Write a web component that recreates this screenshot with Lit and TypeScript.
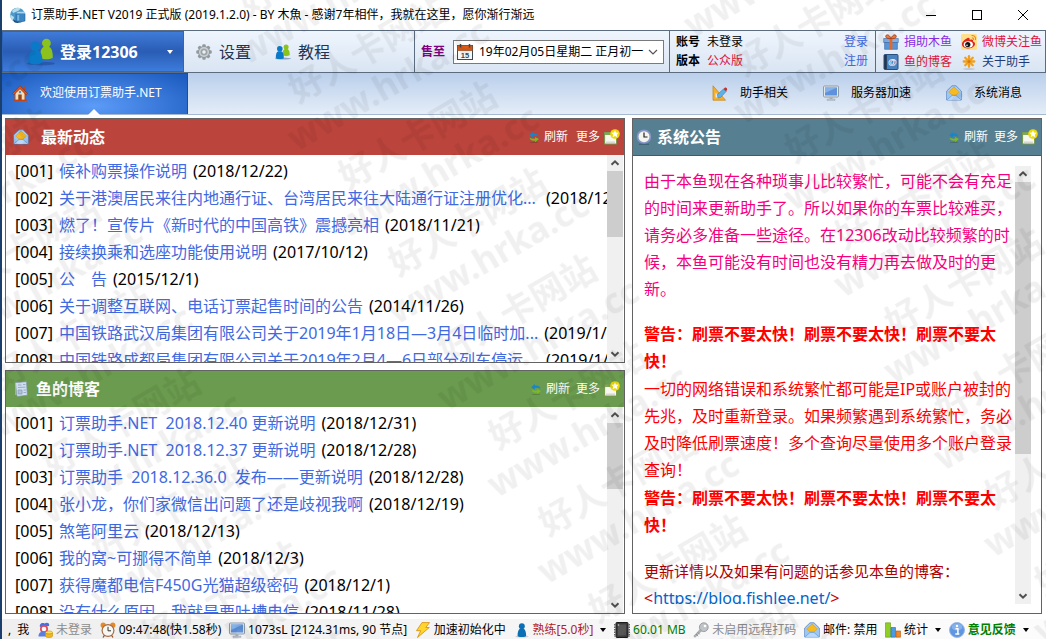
import { LitElement, html, svg, css, nothing, type TemplateResult } from "lit";
import { customElement, property } from "lit/decorators.js";

const icon = (body: unknown, cls = "") =>
  html`<svg class="icon ${cls}" viewBox="0 0 16 16" aria-hidden="true">${body}</svg>`;

const person = (dx: number, dy: number, k: number, fill: string) => svg`
  <g transform="translate(${dx} ${dy}) scale(${k})">
    <circle cx="4" cy="3" r="2.800" fill=${fill}></circle>
    <path d="M0 12.400C-.2 8.600.8 6 2.400 5.400h3.200C7.200 6 8.200 8.600 8 12.400 5.500 13.600 2.500 13.600 0 12.400z" fill=${fill}></path>
  </g>`;

const ICONS = {
  app: svg`<circle cx="7.500" cy="8" r="7.300" fill="#4b9ac9"></circle>
    <path d="M2 4C5 0 9 .5 11 1.500L8 4 3 6zM1 8l3 2-1 4C1 12 .4 10 .5 8z" fill="#b8dce9"></path>
    <path d="M3 12c3 3 7 3.500 10 .5l-1 2c-3 2-6 1.500-8 .5z" fill="#1d4f80"></path>
    <path d="M6 6.500h9v7.500l-4.500 1L6 14z" fill="#3d86c4" stroke="#215f95" stroke-width=".6"></path>
    <path d="M6 6.500l2-1.800h7l.3 1.800z" fill="#a9d5ef"></path><path d="M7.200 8h2v5.500h-2z" fill="#76b7e2"></path>`,
  users: svg`<ellipse cx="8" cy="14.600" rx="8" ry="1" fill="#123a7c" opacity=".4"></ellipse>
    ${person(7.500, .2, .9, "#8cc21d")}${person(.8, 1.800, 1, "#0a7ac8")}`,
  user: svg`<ellipse cx="8" cy="14.500" rx="6.500" ry="1" fill="#888" opacity=".35"></ellipse>${person(3.600, 1, 1.060, "#0a6fb5")}`,
  gear: svg`<g fill="#929a9f">${[0, 45, 90, 135].map(
    (a) => svg`<rect x="6.300" y=".3" width="3.400" height="15.400" rx="1" transform="rotate(${a} 8 8)"></rect>`)}
    <circle cx="8" cy="8" r="6"></circle></g>
    <circle cx="8" cy="8" r="5" fill="#cdd3d5"></circle><circle cx="8" cy="8" r="3.600" fill="#a3abaf"></circle>
    <circle cx="8" cy="8" r="2.200" fill="#eaf0f6" stroke="#7f888d" stroke-width=".6"></circle>`,
  house: svg`<path d="M3 8v7.500h10V8L8 3z" fill="#f6dcb4" stroke="#b64a1c" stroke-width="1"></path>
    <path d="M11.500 1.500h2V6l-2-2z" fill="#b64a1c"></path>
    <path d="M8 .8L15.500 8.500l-1.300 1.300L8 3.800 1.800 9.800.5 8.500z" fill="#df5420" stroke="#8d2d0d" stroke-width=".6"></path>
    <path d="M6.300 9.500h3.400v6H6.300z" fill="#91481e"></path><circle cx="8" cy="7" r="1.200" fill="#4d91cd"></circle>
    <path d="M1 15.200h14" stroke="#c9411a" stroke-width="1.200"></path>`,
  calendar: svg`<rect x=".5" y="1.500" width="15" height="14" fill="#f6f8f8" stroke="#3d4b50"></rect>
    <path d="M.5 1.500h15v5H.5z" fill="#dd5b17"></path><path d="M.5 6.500h15" stroke="#8f3c10" stroke-width=".6"></path>
    <path d="M3.500 0v3.500M12.500 0v3.500" stroke="#444" stroke-width="1.500"></path>
    <text x="8" y="14" text-anchor="middle" font-size="7.500" font-weight="700" fill="#354b55" font-family="Liberation Sans, sans-serif">15</text>`,
  gift: svg`<path d="M.7 4.500h14.600v4H.7z" fill="#7fb2e8" stroke="#3f72ab" stroke-width=".6"></path>
    <path d="M1.600 8.500h12.800v6.800H1.600z" fill="#5b94d6" stroke="#3867a3" stroke-width=".6"></path>
    <path d="M6.600 4.500h2.800v10.800H6.600z" fill="#e06a2c"></path>
    <path d="M8 4.500C5 5 2.300 4 2.800 2S6.500.5 8 4.500C9.500.5 12.700 0 13.200 2S11 5 8 4.500z" fill="#ee8148" stroke="#b23c12" stroke-width=".9"></path>`,
  weibo: svg`<rect width="16" height="16" rx="1.500" fill="#ffe08a"></rect>
    <path d="M6.500 4C3 5.500.6 8.500 1 11c.5 2.500 3.500 3.600 6.500 3.400 4-.3 6.800-2.500 6.500-5-.2-1.400-1.500-1.700-2-2 .3-1.500-.6-2.400-3.300-1.400.2-1.500-.5-2.500-2.200-2z" fill="#e0261b"></path>
    <ellipse cx="7.300" cy="10.400" rx="4.600" ry="3.200" fill="#fff"></ellipse><circle cx="6.800" cy="10.500" r="2.600" fill="#141414"></circle>
    <circle cx="6" cy="11.200" r=".8" fill="#fff"></circle>
    <path d="M10.500 1.500c2.800-.3 4.700 1.800 4 4.600M10.800 3.800c1.400-.1 2 .8 1.700 2" fill="none" stroke="#f08a1c" stroke-width="1.100"></path>`,
  book: svg`<rect x="1" y=".5" width="14" height="15" rx="1" fill="#4a82bf" stroke="#27507f"></rect>
    <path d="M1.200 1h2.600v14H1.200z" fill="#22364e"></path>
    <text x="9.300" y="11.300" text-anchor="middle" font-size="9" font-weight="700" fill="#fff" font-family="Liberation Sans, sans-serif">@</text>`,
  spark: svg`<ellipse cx="8" cy="15" rx="6" ry=".8" fill="#999" opacity=".5"></ellipse>
    <g stroke="#f2a01b" stroke-width="2.300" stroke-linecap="round">${[0, 45, 90, 135].map(
    (a) => svg`<path d="M8 2.200v10.600" transform="rotate(${a} 8 7.500)"></path>`)}</g><circle cx="8" cy="7.500" r="1.500" fill="#d87908"></circle>`,
  ruler: svg`<path d="M1 .8l12.500 14.400H1z" fill="#f5b02c" stroke="#c57f0c" stroke-width=".7"></path><path d="M3.500 7.500l4.300 5H3.500z" fill="#dce9f7"></path>
    <path d="M6 13l-.6-3.500L11.500 4l2.600 2.600L8.500 12.500z" fill="#5fb0e4" stroke="#3a82b6" stroke-width=".6"></path>
    <path d="M11.500 4l1.500-1.400c1-.6 2.600 1 2.100 2L14.100 6.600z" fill="#c22f2a"></path>`,
  monitor: svg`<rect x=".5" y="1" width="15" height="11" rx="1" fill="#e4e9ee" stroke="#8e9ba8"></rect>
    <rect x="2" y="2.500" width="12" height="8" fill="#5e92dc"></rect><path d="M2 2.500h12L2 8z" fill="#86b2ea"></path>
    <path d="M6.500 12h3v2h-3z" fill="#aab3bc"></path><path d="M4 14h8v1.400H4z" fill="#c4cbd1" stroke="#8e9ba8" stroke-width=".4"></path>`,
  mail: svg`<path d="M.7 6L6 .8h4L15.300 6v9H.7z" fill="#a9cef6" stroke="#4f83bf" stroke-width=".8"></path>
    <path d="M2.500 7L8 2l5.500 5L10 10H6z" fill="#f6bb21" stroke="#d08f10" stroke-width=".5"></path>
    <path d="M1 7l5 3.500h4L15 7v8H1z" fill="#9cc6f5"></path><path d="M1 14.800L6 10.500h4l5 4.300" fill="#b9d8fa" stroke="#5c8fca" stroke-width=".6"></path>`,
  note: svg`<path d="M2.500 1.500l11-.8.8 13.600L4 15.500z" fill="#cfdeee" stroke="#7f93a9" stroke-width=".7"></path>
    <path d="M5 4h3.500M10 3.500h2.500M5 6.500l7.500-.4M5 9h4v4H5.300zM10.500 9h2.500M10.500 11.500h2.500" stroke="#8a9fb8" fill="#aec1d8" stroke-width=".8"></path>
    <path d="M2.800 2.500v12" stroke="#e9f1f8" stroke-dasharray="1 1"></path>`,
  clock: svg`<circle cx="8" cy="7.700" r="7.200" fill="#8796c9"></circle><circle cx="8" cy="7.700" r="5.500" fill="#f4f5ef"></circle>
    <path d="M8 3.500V8h3.500" fill="none" stroke="#222" stroke-width="1.200"></path><path d="M3 15.300h10" stroke="#2f4a5a" stroke-width="1" opacity=".6"></path>`,
  refresh: svg`<path d="M1.500 6L6.500 1.200v2.300c4-.8 7 .7 7.500 4.500-2-2-4.500-2-7.500-1.600V8.500z" fill="#1685cc"></path>
    <path d="M14.500 10.500L9.500 15v-2.200C6 13.600 2.700 12.400 2 8.800c2 1.600 4.500 1.700 7.500 1.200V8z" fill="#7cba24"></path>
    <path d="M3 15.500h10" stroke="#222" opacity=".3"></path>`,
  fresh: svg`<rect x=".6" y="3.500" width="12" height="11.500" fill="#f6f7ee" stroke="#74964a"></rect><path d="M1 3.500h11.500V6H1z" fill="#80a957"></path>
    <path d="M2 12.500h9V14H2z" fill="#d6d8cf"></path><circle cx="11" cy="5" r="4.800" fill="#f0d800"></circle>
    <path d="M11 1.200l1.100 2.400 2.600.2-1.900 1.900.6 2.600L11 7l-2.400 1.300.6-2.600-1.900-1.900 2.600-.2z" fill="#fff"></path>`,
  offline: svg`<path d="M3 5C2 2 5 0 7.500 1.500 10 0 13 1 12 4z" fill="#4a6edb"></path><circle cx="7" cy="7" r="4" fill="#e04c5a"></circle>
    <circle cx="7" cy="7" r="2.300" fill="#fff"></circle><path d="M1.500 14.500C1.500 11 3 9.500 7 9.500s5 2 5 5z" fill="#5a7fe0"></path>
    <ellipse cx="12" cy="10.500" rx="3.500" ry="1.600" fill="#ffdc55" stroke="#c8900e" stroke-width=".6"></ellipse><path d="M8.500 11v3c0 2 7 2 7 0v-3c-1 1.500-6 1.500-7 0z" fill="#f4b81f" stroke="#c8900e" stroke-width=".6"></path>`,
  alarm: svg`<circle cx="3.200" cy="3.200" r="2.600" fill="#e58b26"></circle><circle cx="12.800" cy="3.200" r="2.600" fill="#e58b26"></circle>
    <path d="M3 15.500l2-3M13 15.500l-2-3" stroke="#8b4a1b" stroke-width="1.300"></path>
    <circle cx="8" cy="8.500" r="6.500" fill="#a86a45"></circle><circle cx="8" cy="8.500" r="5.300" fill="#f8f8f3"></circle>
    <path d="M8 4.800v4h3" fill="none" stroke="#333"></path>`,
  bolt: svg`<path d="M7 .6h7.500L10.800 5.500h3.500L2.500 15.500l3.200-6.800H1.500z" fill="#ffd52e" stroke="#d38c0b" stroke-width=".8"></path>`,
  chip: svg`<rect x="2" y=".5" width="12" height="15" rx=".8" fill="#3c3c3c" stroke="#1c1c1c"></rect>
    <path d="M.8 2v13M15.200 2v13" stroke="#555" stroke-width="1.400" stroke-dasharray="1.500 1"></path><path d="M4 2.500h8v11H4z" fill="#575757"></path>
    <circle cx="4.500" cy="3" r=".8" fill="#ccc"></circle>`,
  key: svg`<path d="M9 8.500L2 15.300.8 14.200 7.500 7z" fill="#b0b4b6" stroke="#8a8f92" stroke-width=".6"></path><path d="M3 12l2 2.200M4.700 10.300l2 2" stroke="#8a8f92"></path>
    <circle cx="10.800" cy="5.200" r="4.400" fill="#c0c4c6" stroke="#8a8f92" stroke-width=".8"></circle><circle cx="12" cy="4" r="1.300" fill="#fff"></circle>`,
  chart: svg`<path d="M.5.800h5v14.400h-5z" fill="#8fce22" stroke="#5f9a10" stroke-width=".6"></path>
    <path d="M6 5.500h4.500v9.700H6z" fill="#4c9ae2" stroke="#2769aa" stroke-width=".6"></path><path d="M11 9h4.500v6.200H11z" fill="#f0892b" stroke="#b6560e" stroke-width=".6"></path>`,
  info: svg`<circle cx="8" cy="8" r="7.500" fill="#5f96e2" stroke="#9cb9e2"></circle><ellipse cx="8" cy="5" rx="5.500" ry="3.500" fill="#9fc3f3" opacity=".6"></ellipse>
    <circle cx="8" cy="4" r="1.200" fill="#fff"></circle><path d="M6.500 6.800h2.400v5M6.300 12h4" fill="none" stroke="#fff" stroke-width="1.500"></path>`,
  chevron: svg`<path d="M3 6L7 10 11 6" fill="none" stroke="#555" stroke-width="1.200"></path>`,
  up: svg`<path d="M4.500 9.800L8 6.300l3.500 3.500" fill="none" stroke="#505050" stroke-width="2"></path>`,
  down: svg`<path d="M4.500 6.200L8 9.700l3.500-3.500" fill="none" stroke="#505050" stroke-width="2"></path>`,
  min: svg`<path d="M3 8.500h10" stroke="#000"></path>`,
  max: svg`<rect x="3.500" y="3.500" width="9" height="9" fill="none" stroke="#000"></rect>`,
  close: svg`<path d="M3 3l10 10M13 3L3 13" stroke="#000"></path>`,
};
type IconName = keyof typeof ICONS;

interface Entry { title: string; date: string }

const NEWS: Entry[] = [
  { title: "候补购票操作说明", date: "2018/12/22" },
  { title: "关于港澳居民来往内地通行证、台湾居民来往大陆通行证注册优化... ", date: "2018/12/21" },
  { title: "燃了！宣传片《新时代的中国高铁》震撼亮相", date: "2018/11/21" },
  { title: "接续换乘和选座功能使用说明", date: "2017/10/12" },
  { title: "公　告", date: "2015/12/1" },
  { title: "关于调整互联网、电话订票起售时间的公告", date: "2014/11/26" },
  { title: "中国铁路武汉局集团有限公司关于2019年1月18日—3月4日临时加...", date: "2019/1/18" },
  { title: "中国铁路成都局集团有限公司关于2019年2月4—6日部分列车停运... ", date: "2019/1/18" },
];

const BLOG: Entry[] = [
  { title: "订票助手.NET  2018.12.40 更新说明", date: "2018/12/31" },
  { title: "订票助手.NET  2018.12.37 更新说明", date: "2018/12/28" },
  { title: "订票助手  2018.12.36.0  发布——更新说明", date: "2018/12/28" },
  { title: "张小龙，你们家微信出问题了还是歧视我啊", date: "2018/12/19" },
  { title: "煞笔阿里云", date: "2018/12/13" },
  { title: "我的窝~可挪得不简单", date: "2018/12/3" },
  { title: "获得魔都电信F450G光猫超级密码", date: "2018/12/1" },
  { title: "没有什么原因，我就是要吐槽电信", date: "2018/11/28" },
];

@customElement("content-panel")
export class ContentPanel extends LitElement {
  @property() heading = "";
  @property() tone = "red";
  @property() symbol: IconName = "mail";
  @property({ type: Number }) thumb = 30;

  static styles = css`
    :host { display: flex; flex-direction: column; min-height: 0; min-width: 0; box-sizing: border-box; border: 1px solid #636363; background: #fff; }
    * { box-sizing: border-box; }
    header { display: flex; align-items: center; height: 36px; flex: none; padding: 0 4px 0 7px; color: #fff; }
    .red { background: #bb443c; }
    .green { background: #6a9b4e; }
    .teal { background: #567f91; padding: 0 3px; border-bottom: 1px solid #555; height: 37px; }
    .icon { width: 16px; height: 16px; flex: none; }
    .small { width: 12px; height: 14px; margin-right: 4px; }
    h2 { margin: 0 auto 0 12px; font-size: 16px; line-height: 24px; font-weight: 700; }
    .green h2 { margin-left: 7px; }
    .teal h2 { margin-left: 5px; }
    button { border: 0; padding: 0; background: none; color: inherit; font: inherit; font-size: 12px; line-height: 18px; display: flex; align-items: center; }
    button + button { margin-left: 6px; }
    .red button + button { margin-left: 8px; }
    button .tail { margin-left: 4px; }
    .body { display: flex; flex: 1; min-height: 0; }
    .teal + .body { padding: 10px 10px 9px 11px; }
    .view { flex: 1; min-width: 0; min-height: 0; overflow: hidden; }
    .bar { width: 16px; flex: none; background: #f0f0f0; display: flex; flex-direction: column; margin-right: 1px; }
    .teal + .body .bar { margin-right: 0; }
    .track { flex: 1; min-height: 0; }
    .thumb { background: #cdcdcd; }
  `;

  render() {
    return html`
      <header class=${this.tone}>
        ${icon(ICONS[this.symbol])}
        <h2>${this.heading}</h2>
        <button type="button">${icon(ICONS.refresh, "small")}刷新</button>
        <button type="button">更多${icon(ICONS.fresh, "tail")}</button>
      </header>
      <div class="body">
        <div class="view"><slot></slot></div>
        <div class="bar" aria-hidden="true">
          ${icon(ICONS.up)}
          <div class="track"><div class="thumb" style="height:${this.thumb}%"></div></div>
          ${icon(ICONS.down)}
        </div>
      </div>`;
  }
}

@customElement("app-root")
export class AppRoot extends LitElement {
  static styles = css`
    :host {
      display: flex; flex-direction: column; position: relative; height: 100vh; min-height: 480px; overflow: hidden; box-sizing: border-box;
      background: #fff; color: #000; border-left: 2px solid #1b3f6c;
      font: 12px/18px "Noto Sans", "Noto Sans CJK SC", sans-serif;
    }
    * { box-sizing: border-box; }
    a { text-decoration: none; color: #4169e1; }
    button { border: 0; padding: 0; background: none; color: inherit; font: inherit; display: flex; align-items: center; }
    .icon { width: 16px; height: 16px; flex: none; }

    .title { display: flex; align-items: center; height: 30px; flex: none; padding-left: 8px; }
    .title h1 { margin: 0 auto 0 5px; font-size: 12px; font-weight: 400; line-height: 18px; white-space: nowrap; }
    .title button { width: 46px; height: 30px; justify-content: center; }

    .tools { display: flex; height: 43px; flex: none; border: solid #5c6c80; border-width: 1px 1px 1px 0; background: linear-gradient(#eff5fd, #d9e5f3); }
    .login { width: 182px; padding: 0 10px 0 24px; color: #fff; font-size: 16px; font-weight: 700; border: 1px solid #2f66bd; background: linear-gradient(#3f7bd9, #2a5db4 50%, #3c7cdc); }
    .login .icon { width: 28px; height: 28px; margin-right: 5px; }
    .caret { border: solid transparent; border-width: 4px 3px 0; border-top-color: currentColor; flex: none; }
    .login .caret { margin-left: auto; }
    .menu { flex: 1; display: flex; align-items: center; gap: 24px; padding-left: 12px; font-size: 16px; color: #1f3552; }
    .menu button { gap: 7px; }
    .cell { border-left: 1px solid #5c6c80; }
    .until { display: flex; align-items: center; gap: 8px; padding: 0 5px 0 6px; color: #800080; font-weight: 700; }
    .date { display: flex; align-items: center; width: 211px; height: 24px; padding: 0 1px 0 3px; border: 1px solid #7a7a7a; background: #fff; }
    .date select { appearance: none; flex: 1; min-width: 0; border: 0; padding: 0 0 0 6px; background: none; font: inherit; font-weight: 400; color: #000; white-space: pre; }
    .account { width: 206px; display: grid; grid-template-columns: auto 1fr auto; column-gap: 7px; align-content: center; row-gap: 1px; padding: 0 7px 0 6px; }
    .account b { font-weight: 700; }
    .crimson { color: #dc143c; }
    .links { display: grid; grid-template-columns: auto auto; gap: 2px 9px; align-content: center; padding: 0 3px 0 7px; }
    .links a { display: flex; align-items: center; gap: 5px; }
    .links .violet { color: #8a2be2; }
    .links .crimson { color: #dc143c; }
    .links .navy { color: #1f3b7a; }

    .band { display: flex; height: 42px; flex: none; background: linear-gradient(#bacfeb, #e4edf8); border-bottom: 1px solid #a5bad0; }
    .tab { position: relative; width: 186px; padding: 0 0 2px 10px; gap: 12px; color: #fff; background: radial-gradient(ellipse at 50% 80%, #5c9bf7, #1c5cc0 95%); border: solid #1350a8; border-width: 1px 1px 0 0; }
    .tab::after { content: ""; position: absolute; left: 86px; bottom: -1px; border: solid transparent; border-width: 0 6px 6px; border-bottom-color: #fff; }
    .band nav { margin-left: auto; display: flex; align-items: center; gap: 35px; padding: 0 24px 1px 0; }
    .band nav button { gap: 12px; }

    main { flex: 1; min-height: 0; display: grid; grid-template-columns: 620fr 410fr; grid-template-rows: 1fr 1fr; gap: 7px; padding: 3px 4px 5px 3px; }
    .notice { grid-column: 2; grid-row: 1 / 3; }
    ul { list-style: none; margin: 0; padding: 3px 0 0 9px; font-size: 16px; line-height: 27px; }
    li { display: flex; gap: 6px; white-space: pre; height: 27px; }
    .text { padding-top: 2px; font-size: 16px; line-height: 27px; color: #f00; }
    .text p { margin: 0; }
    .text p + p { margin-top: 1px; }
    .text .pink { color: #f5007f; margin-bottom: 18px; }
    .text .warn { font-weight: 700; }
    .text p.more { margin-top: 19px; font-size: 15px; color: #b00000; }
    .text p.address { margin-top: 0; color: #c00; }
    .text .address a { color: #0066cc; text-decoration: underline; }

    .status { display: flex; align-items: center; justify-content: space-between; height: 20px; flex: none; padding: 2px 17px 0 6px; background: linear-gradient(90deg, #efefef, #fcfcfc); white-space: nowrap; }
    .status span, .status button { display: flex; align-items: center; gap: 3px; }
    .status .lead { gap: 6px; }
    .grey { color: #8c8c8c; }
    .brown { color: #b22222; }
    .green { color: #008000; }
    .status .strong { font-weight: 700; }
    .status .caret { margin-left: 4px; border-top-color: #000; }
    .mark { position: absolute; inset: 0; width: 100%; height: 100%; pointer-events: none; }
  `;

  private list(entries: Entry[]): TemplateResult {
    return html`<ul>${entries.map((e, i) => html`<li><span>[${String(i + 1).padStart(3, "0")}]</span><a href="#">${e.title}</a><span>(${e.date})</span></li>`)}</ul>`;
  }

  private item(name: IconName, text: string, cls = "", caret = false) {
    const inner = html`${icon(ICONS[name])}${text}${caret ? html`<i class="caret"></i>` : nothing}`;
    return caret ? html`<button type="button" class=${cls}>${inner}</button>` : html`<span class=${cls}>${inner}</span>`;
  }

  render() {
    return html`
      <div class="title">
        ${icon(ICONS.app)}
        <h1>订票助手.NET V2019 正式版 (2019.1.2.0) - BY 木魚 - 感谢7年相伴，我就在这里，愿你渐行渐远</h1>
        <button type="button" aria-label="最小化">${icon(ICONS.min)}</button>
        <button type="button" aria-label="最大化">${icon(ICONS.max)}</button>
        <button type="button" aria-label="关闭">${icon(ICONS.close)}</button>
      </div>

      <div class="tools">
        <button type="button" class="login">${icon(ICONS.users)}登录12306<i class="caret"></i></button>
        <div class="menu">
          <button type="button">${icon(ICONS.gear)}设置</button>
          <button type="button">${icon(ICONS.users)}教程</button>
        </div>
        <div class="cell until">
          <label for="until">售至</label>
          <div class="date">
            ${icon(ICONS.calendar)}
            <select id="until"><option>19年02月05日星期二  正月初一</option></select>
            ${icon(ICONS.chevron)}
          </div>
        </div>
        <div class="cell account">
          <b>账号</b><span>未登录</span><a href="#">登录</a>
          <b>版本</b><span class="crimson">公众版</span><a href="#">注册</a>
        </div>
        <div class="cell links">
          <a href="#" class="violet">${icon(ICONS.gift)}捐助木鱼</a>
          <a href="#" class="crimson">${icon(ICONS.weibo)}微博关注鱼</a>
          <a href="#" class="crimson">${icon(ICONS.book)}鱼的博客</a>
          <a href="#" class="navy">${icon(ICONS.spark)}关于助手</a>
        </div>
      </div>

      <div class="band">
        <button type="button" class="tab">${icon(ICONS.house)}欢迎使用订票助手.NET</button>
        <nav>
          <button type="button">${icon(ICONS.ruler)}助手相关</button>
          <button type="button">${icon(ICONS.monitor)}服务器加速</button>
          <button type="button">${icon(ICONS.mail)}系统消息</button>
        </nav>
      </div>

      <main>
        <content-panel heading="最新动态" tone="red" symbol="mail" thumb="38">${this.list(NEWS)}</content-panel>
        <content-panel heading="鱼的博客" tone="green" symbol="note" thumb="38">${this.list(BLOG)}</content-panel>
        <content-panel class="notice" heading="系统公告" tone="teal" symbol="clock" thumb="67">
          <div class="text">
            <p class="pink">由于本鱼现在各种琐事儿比较繁忙，可能不会有充足的时间来更新助手了。所以如果你的车票比较难买，请务必多准备一些途径。在12306改动比较频繁的时候，本鱼可能没有时间也没有精力再去做及时的更新。</p>
            <p class="warn">警告：刷票不要太快！刷票不要太快！刷票不要太快！</p>
            <p>一切的网络错误和系统繁忙都可能是IP或账户被封的先兆，及时重新登录。如果频繁遇到系统繁忙，务必及时降低刷票速度！多个查询尽量使用多个账户登录查询！</p>
            <p class="warn">警告：刷票不要太快！刷票不要太快！刷票不要太快！</p>
            <p class="more">更新详情以及如果有问题的话参见本鱼的博客：</p>
            <p class="address">&lt;<a href="#">https://blog.fishlee.net/</a>&gt;</p>
          </div>
        </content-panel>
      </main>

      <div class="status">
        <span class="lead"><span>,</span><span>我</span></span>
        ${this.item("offline", "未登录", "grey")}
        ${this.item("alarm", "09:47:48(快1.58秒)")}
        ${this.item("monitor", "1073sL [2124.31ms, 90 节点]")}
        ${this.item("bolt", "加速初始化中")}
        ${this.item("user", "熟练[5.0秒]", "brown", true)}
        ${this.item("chip", "60.01 MB", "green")}
        ${this.item("key", "未启用远程打码", "grey")}
        ${this.item("mail", "邮件: 禁用")}
        ${this.item("chart", "统计", "", true)}
        ${this.item("info", "意见反馈", "green strong", true)}
      </div>

      <svg class="mark" aria-hidden="true">
        <defs>
          <pattern id="tile" x="92" y="197" width="400" height="100" patternUnits="userSpaceOnUse" patternTransform="rotate(-30)">
            <g fill="#000" fill-opacity=".06" font-size="35" font-weight="700" text-anchor="middle">
              <text x="200" y="41">好人卡网站</text>
              <text x="200" y="82">www.hrka.cc</text>
            </g>
          </pattern>
        </defs>
        <rect width="100%" height="100%" fill="url(#tile)"></rect>
      </svg>`;
  }
}
